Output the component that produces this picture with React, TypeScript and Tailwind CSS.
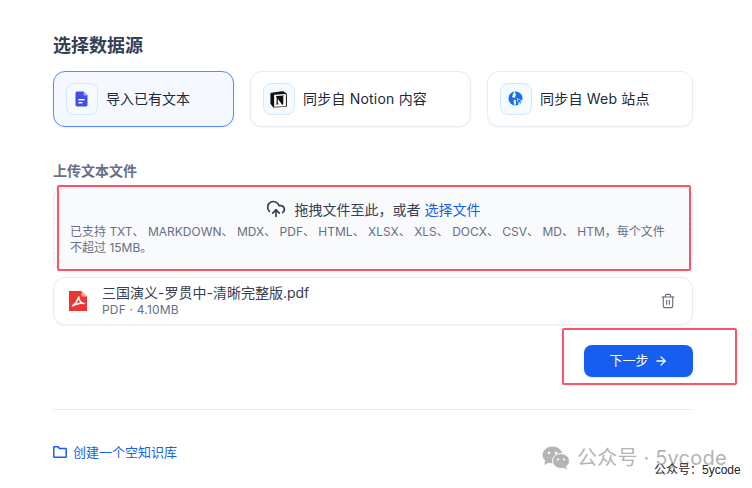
import React from "react";
import { ArrowRight, Trash2, CloudUpload } from "lucide-react";

const font = { fontFamily: '"Inter", "Noto Sans CJK SC", sans-serif' };

function FileIcon() {
  return (
    <svg width="14" height="16" viewBox="0 0 14 16">
      <path d="M2.200 .5H8.500L12.500 4.500V13.800C12.500 14.800 11.700 15.500 10.800 15.500H2.200C1.200 15.500 .5 14.800 .5 13.800V2.200C.5 1.200 1.200 .5 2.200 .5Z" fill="#444ce7" />
      <path d="M8.500 .5V3.500C8.500 4.100 8.900 4.500 9.500 4.500H12.500Z" fill="#a4a7f0" />
      <rect x="3.400" y="8" width="6.200" height="1.400" fill="#fff" />
      <rect x="3.400" y="11" width="4" height="1.400" fill="#fff" />
    </svg>
  );
}

function NotionIcon() {
  return (
    <svg width="18" height="18" viewBox="0 0 18 18">
      <path d="M1.500 2.700 11.800 1.300c1.200-.1 1.600 0 2.300.5l2.200 1.500c.5.3.6.5.6 1v11.200c0 .8-.3 1.200-1.200 1.300L4.300 17.600c-.7 0-1-.1-1.400-.6L1 14.600c-.4-.6-.6-1-.6-1.500V3.800c0-.6.3-1 1.100-1.100Z" fill="#111" />
      <path d="M4.500 4.800 15.300 4.100c.4 0 .6.200.6.600V15.500c0 .4-.2.600-.6.700L4.700 16.800c-.4 0-.6-.2-.6-.6V5.300c0-.3.100-.5.400-.5Z" fill="#fff" />
      <path d="M5.800 6.400V5.900L14.200 5.400V5.900L13.300 6.100V14.600L12 14.800 7.800 8.800V13.400L8.900 13.700V14.200L5.800 14.500V14L6.600 13.800V6.900Z" fill="#111" />
    </svg>
  );
}

function WebIcon() {
  return (
    <svg width="16" height="16" viewBox="0 0 16 16">
      <circle cx="7.500" cy="7.500" r="7" fill="#1570ef" />
      <path d="M8.500 7 15.500 10 12.300 11.300 11 15Z" fill="#fff" />
      <path d="M9.400 8 14 10 11.700 10.800 10.900 13Z" fill="#1570ef" />
      <path d="M6.500 .5 8 3.800 7 6.200 6.500 7 4 6 5 3Z" fill="#fff" />
      <path d="M5.800 8.500 8 9.500 8 13 6.800 14.500 5.800 12Z" fill="#fff" />
    </svg>
  );
}

function PdfIcon() {
  return (
    <svg width="18" height="20" viewBox="0 0 18 20">
      <path d="M0 0H12.500L18 5.500V20H0Z" fill="#ef3434" />
      <path d="M12.500 0 18 5.500H12.500Z" fill="#f8a5a5" />
      <path d="M3.500 14.800C6 13 8.500 10 9.800 6C10 9 12 12 15 12.500C11.500 11.500 7.500 12.500 3.500 14.800Z" fill="none" stroke="#fff" strokeWidth="1.600" strokeLinejoin="round" />
    </svg>
  );
}

function FolderIcon() {
  return (
    <svg width="14" height="12" viewBox="0 0 14 12" fill="none">
      <path d="M.8 1.300C.8 1 1 .8 1.300 .8H5.400L6.300 2.600H12.700C13 2.600 13.200 2.800 13.200 3.100V10.700C13.200 11 13 11.200 12.700 11.200H1.300C1 11.200 .8 11 .8 10.700Z" stroke="#155eef" strokeWidth="1.500" />
    </svg>
  );
}

function Wechat() {
  return (
    <svg width="28" height="24" viewBox="0 0 28 24">
      <ellipse cx="10.500" cy="9" rx="10" ry="8.500" fill="#b4b4b4" />
      <path d="M3 14 2.500 19 8 16Z" fill="#b4b4b4" />
      <ellipse cx="19" cy="15" rx="8.500" ry="7.500" fill="#b4b4b4" stroke="#fff" strokeWidth="1" />
      <path d="M24 20 25 23.500 21 21.500Z" fill="#b4b4b4" />
      <circle cx="7" cy="7" r="1.300" fill="#fff" />
      <circle cx="14" cy="7" r="1.300" fill="#fff" />
      <circle cx="16" cy="13.500" r="1.100" fill="#fff" />
      <circle cx="22" cy="13.500" r="1.100" fill="#fff" />
    </svg>
  );
}

function SourceCard({ icon, label, width, active }: { icon: React.ReactNode; label: string; width: string; active?: boolean }) {
  return (
    <div
      className={`flex h-14 items-center rounded-xl border pl-3 shadow-[0_1px_2px_rgba(16,24,40,0.05)] ${width} ${active ? "border-[#528bff] bg-[#f5f8ff]" : "border-[#eaecf0] bg-white"}`}
    >
      <div className="flex h-8 w-8 shrink-0 items-center justify-center rounded-lg border border-[#d1e9ff] bg-[#f5faff]">{icon}</div>
      <span className={`ml-2 text-[14px] leading-5 text-[#1d2939] ${active ? "" : "tracking-[0.2px]"}`}>{label}</span>
    </div>
  );
}

export default function App() {
  return (
    <div className="relative h-[488px] w-[752px] overflow-hidden bg-white" style={font}>
      <div className="ml-[53px] flex w-[640px] flex-col pt-[34px]">
        <h1 className="text-[18px] font-semibold leading-6 text-[#344054]">选择数据源</h1>
        <div className="mt-[13px] flex gap-4">
          <SourceCard active width="w-[181px]" icon={<FileIcon />} label="导入已有文本" />
          <SourceCard width="w-[221px]" icon={<NotionIcon />} label="同步自 Notion 内容" />
          <SourceCard width="w-[206px]" icon={<WebIcon />} label="同步自 Web 站点" />
        </div>
        <h2 className="mt-[34px] text-[14px] font-semibold leading-5 text-[#667085]">上传文本文件</h2>
        <div className="mt-[5px] h-[85px] rounded-xl border border-dashed border-[#e4e7ec] bg-[#f9fafb] px-4 pt-3">
          <div className="flex h-5 items-center justify-center gap-[9px] text-[14px] text-[#344054]">
            <CloudUpload size={20} strokeWidth={2} className="text-[#344054]" />
            <span>
              拖拽文件至此，或者 <span className="text-[#155eef]">选择文件</span>
            </span>
          </div>
          <p className="mt-[5px] pr-2 text-[12px] leading-4 text-[#667085]">
            已支持 TXT、 MARKDOWN、 MDX、 PDF、 HTML、 XLSX、 XLS、 DOCX、 CSV、 MD、 HTM，每个文件不超过 15MB。
          </p>
        </div>
        <div className="mt-[6px] flex h-12 items-center rounded-xl border border-[#eaecf0] bg-white pl-[15px] pr-[16px] shadow-[0_1px_2px_rgba(16,24,40,0.05)]">
          <PdfIcon />
          <div className="ml-[15px] flex flex-1 flex-col">
            <span className="mb-[2px] text-[14px] leading-[15px] text-[#344054]">三国演义-罗贯中-清晰完整版.pdf</span>
            <span className="text-[12px] leading-[15px] tracking-[0.2px] text-[#667085]">PDF · 4.10MB</span>
          </div>
          <Trash2 size={16} strokeWidth={1.700} className="text-[#667085]" />
        </div>
        <div className="mt-5 flex justify-end">
          <button className="flex h-8 w-[109px] items-center justify-center gap-[5px] rounded-lg bg-[#155eef] text-[13px] text-white shadow-[0_1px_2px_rgba(16,24,40,0.1)]">
            下一步
            <ArrowRight size={14} strokeWidth={2.200} />
          </button>
        </div>
        <div className="mt-[32px] h-px bg-[#eaecf0]" />
        <div className="mt-[32px] flex items-center gap-[6px] text-[13px] leading-5 text-[#155eef]">
          <FolderIcon />
          创建一个空知识库
        </div>
      </div>

      <div className="pointer-events-none absolute left-[57px] top-[185px] h-[86px] w-[634px] rounded-[2px] border-2 border-[#ff5266]" />
      <div className="pointer-events-none absolute left-[562px] top-[328px] h-[57px] w-[175px] rounded-[2px] border-2 border-[#ff5266]" />

      <div className="absolute left-[542px] top-[443px] flex items-center gap-[7px] text-[20px] tracking-[0.2px] text-[#b4b4b4]">
        <Wechat />
        <span>公众号 · 5ycode</span>
      </div>
      <div className="absolute left-[654px] top-[462px] text-[12px] leading-4 text-[#222]" style={{ fontFamily: '"Liberation Sans", "Noto Sans CJK SC", sans-serif' }}>公众号：5ycode</div>
    </div>
  );
}
